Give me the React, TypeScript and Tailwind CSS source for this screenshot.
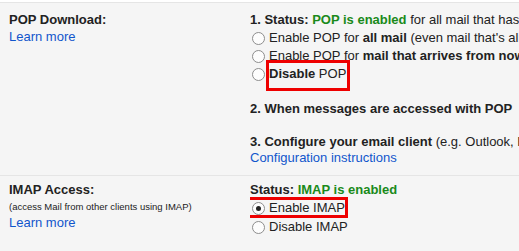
import type { ReactNode } from "react";

function Radio({ checked = false }: { checked?: boolean }) {
  return (
    <span className="mr-[4px] ml-[2px] inline-flex h-[13px] w-[13px] shrink-0 items-center justify-center rounded-full border border-[#8d8d8d] bg-[#fdfdfd]">
      {checked && <span className="h-[5px] w-[5px] rounded-full bg-[#222]" />}
    </span>
  );
}

function RadioRow({ checked, children }: { checked?: boolean; children: ReactNode }) {
  return (
    <div className="flex h-[18px] items-center whitespace-nowrap">
      <Radio checked={checked} />
      <span>{children}</span>
    </div>
  );
}

function Link({ children }: { children: ReactNode }) {
  return <span className="text-[#1155cc]">{children}</span>;
}

export default function App() {
  return (
    <div
      className="h-[251px] w-[519px] overflow-hidden bg-[#f5f5f5] text-[13px] text-[#222]"
      style={{ fontFamily: '"Liberation Sans", Arial, sans-serif' }}
    >
      <div className="h-[2px] bg-white" />
      {/* POP section */}
      <div className="flex border-t border-[#e5e5e5] pt-[8px] pb-[9px]">
        <div className="w-[250px] shrink-0 pl-[9px]">
          <div className="font-bold leading-[18px]">POP Download:</div>
          <div className="leading-[16px]">
            <Link>Learn more</Link>
          </div>
        </div>
        <div className="min-w-0 flex-1 overflow-hidden whitespace-nowrap">
          <div className="leading-[18px]">
            <b>1. Status: </b>
            <b className="text-[#1a8a1a]">POP is enabled</b> for all mail that has arrived since 10/5/12
          </div>
          <RadioRow>
            Enable POP for <b>all mail</b> (even mail that's already been downloaded)
          </RadioRow>
          <RadioRow>
            Enable POP for <b>mail that arrives from now on</b>
          </RadioRow>
          <RadioRow>
            <span className="relative inline-block">
              <b>Disable</b> POP
              <span className="pointer-events-none absolute -top-[4px] -right-[4px] -bottom-[7px] -left-[3px] border-[3px] border-[#ee0000]" />
            </span>
          </RadioRow>
          <div className="mt-[17px] leading-[18px] font-bold">
            2. When messages are accessed with POP
          </div>
          <div className="mt-[16px] leading-[16px]">
            <b>3. Configure your email client</b> (e.g. Outlook, Eudora, Netscape Mail)
          </div>
          <div className="leading-[16px]">
            <Link>Configuration instructions</Link>
          </div>
        </div>
      </div>
      {/* IMAP section */}
      <div className="flex border-t border-[#e5e5e5] pt-[5px]">
        <div className="w-[250px] shrink-0 pl-[9px]">
          <div className="font-bold leading-[18px]">IMAP Access:</div>
          <div className="text-[9.5px] leading-[16px]">(access Mail from other clients using IMAP)</div>
          <div className="leading-[16px]">
            <Link>Learn more</Link>
          </div>
        </div>
        <div className="min-w-0 flex-1 overflow-hidden whitespace-nowrap">
          <div className="leading-[18px]">
            <b>Status: </b>
            <b className="text-[#1a8a1a]">IMAP is enabled</b>
          </div>
          <div className="relative w-[95px]">
            <RadioRow checked>Enable IMAP</RadioRow>
            <span className="pointer-events-none absolute -top-[2px] -right-[3px] -bottom-[1px] -left-[3px] border-[3px] border-[#ee0000]" />
          </div>
          <div className="mt-[1px]">
            <RadioRow>Disable IMAP</RadioRow>
          </div>
        </div>
      </div>
    </div>
  );
}
